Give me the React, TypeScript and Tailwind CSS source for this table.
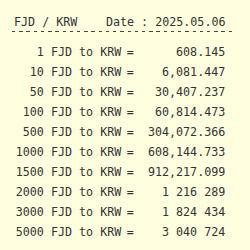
import React from "react";

const rows: [string, string][] = [
  ["1", "608.145"],
  ["10", "6,081.447"],
  ["50", "30,407.237"],
  ["100", "60,814.473"],
  ["500", "304,072.366"],
  ["1000", "608,144.733"],
  ["1500", "912,217.099"],
  ["2000", "1 216 289"],
  ["3000", "1 824 434"],
  ["5000", "3 040 724"],
];

export default function App() {
  return (
    <div className="w-[250px] h-[250px] bg-[#ffffe0] text-[#333333] font-['DejaVu_Sans_Mono',monospace] text-[11.7px] overflow-hidden pt-[12px]">
      <div className="flex justify-between w-[225.5px] pl-[14px] h-[20px] leading-[20px] whitespace-pre">
        <span>FJD / KRW</span>
        <span>Date : 2025.05.06</span>
      </div>
      <div className="-mt-[1px] ml-[12px] w-[220px] h-px bg-[repeating-linear-gradient(90deg,#444444_0px,#444444_3.4px,transparent_3.4px,transparent_7.22px)]" />
      <div className="mt-[9.7px] flex flex-col">
        {rows.map(([a, v]) => (
          <div key={a} className="flex w-[225.3px] h-[20px] leading-[20px] whitespace-pre">
            <span className="w-[121.3px] text-right">{a} FJD to KRW</span>
            <span className="ml-[5.5px] w-[7.05px]">=</span>
            <span className="flex-1 text-right">{v}</span>
          </div>
        ))}
      </div>
    </div>
  );
}
